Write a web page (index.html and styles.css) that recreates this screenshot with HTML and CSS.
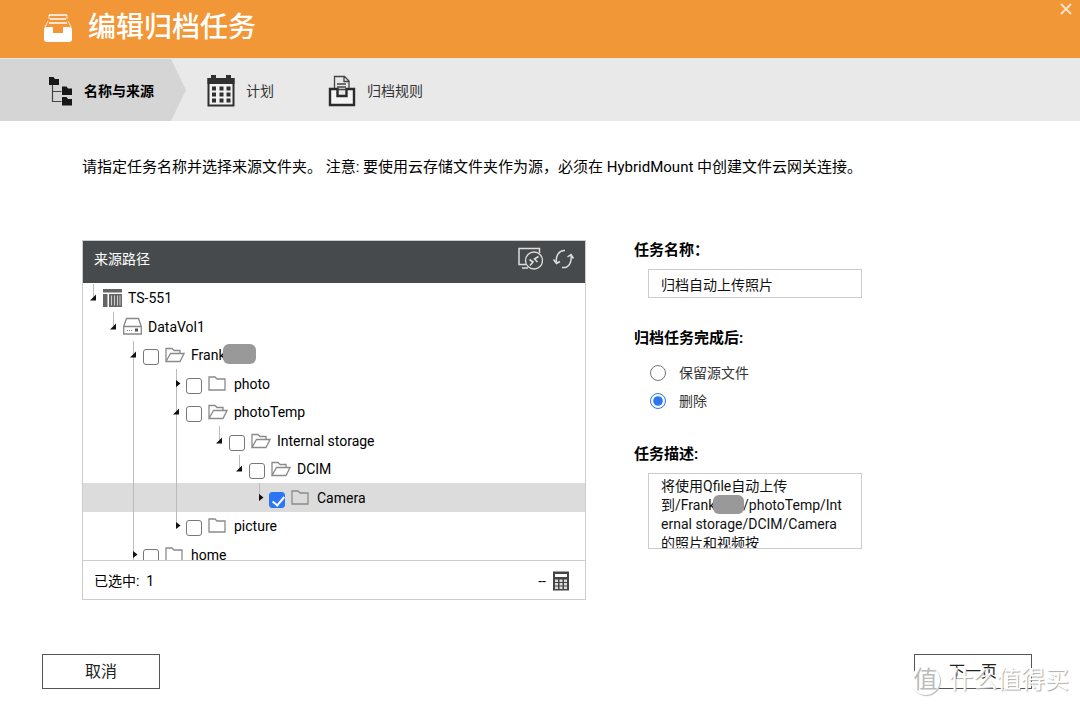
FILE: index.html
```html
<!DOCTYPE html>
<html lang="zh-CN">
<head>
<meta charset="utf-8">
<title>编辑归档任务</title>
<link rel="stylesheet" href="styles.css">
</head>
<body>
<svg class="defs" aria-hidden="true">
  <symbol id="open" viewBox="0 0 9 28"><path d="M6 10.5V16.5H0Z" fill="#111"/></symbol>
  <symbol id="closed" viewBox="0 0 9 28"><path d="M3 10L7.5 13.5L3 17Z" fill="#111"/></symbol>
  <symbol id="folder" viewBox="0 0 20 16"><path d="M1 14V1H7L9 3H17V14Z" fill="none" stroke="#8a8a8a" stroke-width="1.3"/></symbol>
  <symbol id="folder-open" viewBox="0 0 20 16"><path d="M1 14.500V1.500H7L9 3.500H15V6.500M1 14.500L5.500 6.500H19L15 14.500Z" fill="none" stroke="#8a8a8a" stroke-width="1.3"/></symbol>
</svg>

<header class="titlebar">
  <svg class="title-icon" viewBox="0 0 30 30" aria-hidden="true">
    <path d="M6 2H24M7 6H23M6 10H24" stroke="#fff" stroke-width="1.4"/>
    <path d="M6 2V6M24 2V6M5 8L2 14M25 8L28 14" stroke="#fff" stroke-width="1" opacity=".8"/>
    <path d="M3 14H10V20H20V14H27Q29 14 29 16V26Q29 29 26 29H4Q1 29 1 26V16Q1 14 3 14Z" fill="#fff"/>
  </svg>
  <h1>编辑归档任务</h1>
  <button class="close" aria-label="关闭"><svg viewBox="0 0 12 12"><path d="M1 1L11 11M11 1L1 11" stroke="#fbe3ca" stroke-width="1.8"/></svg></button>
</header>

<ol class="steps">
  <li class="step current" aria-current="step">
    <svg class="step-icon tree-icon" viewBox="0 0 24 30" aria-hidden="true">
      <path d="M4 9V25.500H13M4 15.500H13" fill="none" stroke="#444" stroke-width="1.2"/>
      <path d="M.5 1H5L6.500 3H10.500V9H.5ZM13.500 10.500H18L19.500 12.500H23.500V19H13.500ZM13.500 21H18L19.500 23H23.500V29.500H13.500Z" fill="#181818"/>
    </svg>
    <span>名称与来源</span>
  </li>
  <li class="step">
    <svg class="step-icon" viewBox="0 0 28 32" aria-hidden="true">
      <path d="M1.500 4H26.500V30.500H1.500Z" fill="#f1f1f1" stroke="#303030" stroke-width="2"/>
      <path d="M.5 3H27.500V9H.5ZM4 0H9V4H4ZM19 0H24V4H19Z" fill="#303030"/>
      <path d="M5 11.500h4v4H5zm7.500 0h4v4h-4zm7 0h4v4h-4zM5 17.500h4v4H5zm7.500 0h4v4h-4zm7 0h4v4h-4zM5 23.500h4v4H5zm7.500 0h4v4h-4zm7 0h4v4h-4z" fill="#303030"/>
    </svg>
    <span>计划</span>
  </li>
  <li class="step">
    <svg class="step-icon" viewBox="0 0 28 32" aria-hidden="true">
      <path d="M2 14H9.500V21H18.500V14H26V30H2Z" fill="#f4f4f4" stroke="#2b2b2b" stroke-width="2.400"/>
      <path d="M6.500 13V1.500H16.500L21 6V13M16 2V6.500H21M9 9H18M9 12H18M9.500 14.500H18.500" fill="none" stroke="#444" stroke-width="1.300"/>
    </svg>
    <span>归档规则</span>
  </li>
</ol>

<main>
  <p class="intro">请指定任务名称并选择来源文件夹。 注意: 要使用云存储文件夹作为源，必须在 HybridMount 中创建文件云网关连接。</p>
  <div class="columns">
    <section class="panel">
      <div class="panel-head">
        <h2>来源路径</h2>
        <button class="tool" aria-label="远程连接"><svg viewBox="0 0 26 24"><path d="M9 17.500H2V1.500H22.500V6M5 21H11" fill="none" stroke="#ddd" stroke-width="1.500"/><circle cx="17" cy="13.500" r="8.500" fill="#474a4c" stroke="#ddd" stroke-width="1.300"/><path d="M12.500 12.500L16 15L13 18.500M21.500 9.500L17.500 12L20.500 15" fill="none" stroke="#ddd" stroke-width="1.600"/></svg></button>
        <button class="tool" aria-label="刷新"><svg viewBox="0 0 26 24"><path d="M14 3.500C8 3 4.500 9 5.500 15M2.500 12.500L5.500 16.500L9 14.500M11 20.500C18 21.500 21 15 20 8.500M16.500 10L20 7.500L22.500 11.500" fill="none" stroke="#ddd" stroke-width="1.500"/></svg></button>
      </div>
      <div class="tree" role="tree">
        <div class="row" role="treeitem">
          <button class="toggle half" aria-label="折叠"><svg><use href="#open"/></svg></button>
          <svg class="node" viewBox="0 0 20 20"><path d="M0 1H19V4.500H0ZM0 6H4.500V19H0ZM6 6H19V19H6Z" fill="#666"/><path d="M8.500 7.500V17.500M11.500 7.500V17.500M14.500 7.500V17.500M17 7.500V17.500" stroke="#ccc"/></svg>
          <span>TS-551</span>
        </div>
        <div class="row" role="treeitem">
          <i class="indent"></i>
          <button class="toggle half" aria-label="折叠"><svg><use href="#open"/></svg></button>
          <svg class="node" viewBox="0 0 20 20"><path d="M.7 9.500L3.500 1.500H15.500L18.300 9.500V17H.7ZM.7 9.500H18.300" fill="none" stroke="#888" stroke-width="1.300"/><path d="M4 13.500H10" stroke="#888" stroke-dasharray="1 1"/><path d="M12 11.500H15V14.500H12Z" fill="#555"/></svg>
          <span>DataVol1</span>
        </div>
        <div class="row" role="treeitem">
          <i class="indent"></i><i class="indent"></i>
          <button class="toggle" aria-label="折叠"><svg><use href="#open"/></svg></button>
          <input type="checkbox" id="n1"><label for="n1"><svg class="folder"><use href="#folder-open"/></svg><span class="masked">Frank</span></label>
        </div>
        <div class="row" role="treeitem">
          <i class="indent"></i><i class="indent"></i><i class="indent wide line"></i>
          <button class="toggle" aria-label="展开"><svg><use href="#closed"/></svg></button>
          <input type="checkbox" id="n2"><label for="n2"><svg class="folder"><use href="#folder"/></svg><span>photo</span></label>
        </div>
        <div class="row" role="treeitem">
          <i class="indent"></i><i class="indent"></i><i class="indent wide line"></i>
          <button class="toggle" aria-label="折叠"><svg><use href="#open"/></svg></button>
          <input type="checkbox" id="n3"><label for="n3"><svg class="folder"><use href="#folder-open"/></svg><span>photoTemp</span></label>
        </div>
        <div class="row" role="treeitem">
          <i class="indent"></i><i class="indent"></i><i class="indent wide line"></i><i class="indent wide line"></i>
          <button class="toggle half" aria-label="折叠"><svg><use href="#open"/></svg></button>
          <input type="checkbox" id="n4"><label for="n4"><svg class="folder"><use href="#folder-open"/></svg><span>Internal storage</span></label>
        </div>
        <div class="row" role="treeitem">
          <i class="indent"></i><i class="indent"></i><i class="indent wide line"></i><i class="indent wide line"></i><i class="indent"></i>
          <button class="toggle half" aria-label="折叠"><svg><use href="#open"/></svg></button>
          <input type="checkbox" id="n5"><label for="n5"><svg class="folder"><use href="#folder-open"/></svg><span>DCIM</span></label>
        </div>
        <div class="row selected" role="treeitem" aria-selected="true">
          <i class="indent"></i><i class="indent"></i><i class="indent wide line"></i><i class="indent wide line"></i><i class="indent"></i><i class="indent"></i>
          <button class="toggle half" aria-label="展开"><svg><use href="#closed"/></svg></button>
          <input type="checkbox" id="n6" checked><label for="n6"><svg class="folder"><use href="#folder"/></svg><span>Camera</span></label>
        </div>
        <div class="row" role="treeitem">
          <i class="indent"></i><i class="indent"></i><i class="indent wide line"></i>
          <button class="toggle half" aria-label="展开"><svg><use href="#closed"/></svg></button>
          <input type="checkbox" id="n7"><label for="n7"><svg class="folder"><use href="#folder"/></svg><span>picture</span></label>
        </div>
        <div class="row" role="treeitem">
          <i class="indent"></i><i class="indent"></i>
          <button class="toggle" aria-label="展开"><svg><use href="#closed"/></svg></button>
          <input type="checkbox" id="n8"><label for="n8"><svg class="folder"><use href="#folder"/></svg><span>home</span></label>
        </div>
      </div>
      <div class="panel-foot">
        <span class="count">已选中:&nbsp; 1</span>
        <span>--</span>
        <button class="calc" aria-label="计算大小"><svg viewBox="0 0 18 20"><path d="M1 .5H17V19.500H1Z" fill="#444"/><path d="M3 3H15V6H3Z" fill="#fff"/><path d="M3 8.500h3v2.500H3zm4.500 0h3v2.500h-3zm4.500 0h3v2.500h-3zM3 12h3v2.500H3zm4.500 0h3v2.500h-3zm4.500 0h3v2.500h-3zM3 15.500h3v2.500H3zm4.500 0h3v2.500h-3zm4.500 0h3v2.500h-3z" fill="#ddd"/></svg></button>
      </div>
    </section>

    <form class="form">
      <label class="heading" for="name">任务名称：</label>
      <input class="field" id="name" type="text" value="归档自动上传照片">
      <fieldset>
        <legend class="heading">归档任务完成后:</legend>
        <label class="option"><input type="radio" name="after">保留源文件</label>
        <label class="option"><input type="radio" name="after" checked>删除</label>
      </fieldset>
      <label class="heading" for="desc">任务描述:</label>
      <div class="desc-wrap">
        <textarea class="field" id="desc">将使用Qfile自动上传
到/Frank&nbsp;&nbsp;&nbsp;&nbsp;&nbsp;&nbsp;&nbsp;&nbsp;/photoTemp/Int
ernal storage/DCIM/Camera
的照片和视频按</textarea>
        <i class="mask"></i>
      </div>
    </form>
  </div>
</main>

<footer class="actions">
  <button class="action">取消</button>
  <button class="action">下一页</button>
</footer>
<div class="watermark"><span class="badge">值</span><span>什么值得买</span></div>
</body>
</html>
```
FILE: styles.css
```css
* { box-sizing: border-box; }

body {
  position: relative;
  display: flex;
  flex-direction: column;
  min-height: 100vh;
  margin: 0;
  background: #fff;
  color: #000;
  font: 14px/20px Roboto, "Noto Sans CJK SC", sans-serif;
}

button, input, textarea { font: inherit; color: inherit; }
button { padding: 0; border: 0; background: none; cursor: pointer; }
h1, h2, p, ol, fieldset { margin: 0; padding: 0; border: 0; }
svg { display: block; flex: none; }
.defs { position: absolute; width: 0; height: 0; }

.titlebar {
  position: relative;
  display: flex;
  align-items: center;
  gap: 15px;
  height: 58px;
  padding: 0 43px 2px;
  background: #f19738;
}
.titlebar h1 { color: #fff; font-size: 28px; font-weight: 500; line-height: 40px; }
.title-icon { width: 30px; height: 30px; }
.close { position: absolute; top: 3px; right: 8px; }
.close svg { width: 12px; height: 12px; }

.steps {
  display: flex;
  height: 63px;
  border-top: 1px solid #ece5dc;
  background: #e9e9e9;
  list-style: none;
}
.step {
  display: flex;
  align-items: center;
  gap: 11px;
  margin-right: 54px;
  padding-top: 1px;
  color: #333;
}
.step.current {
  width: 186px;
  margin-right: 21px;
  padding-left: 48px;
  background: #d5d5d5;
  clip-path: polygon(0 0, 171px 0, 100% 50%, 171px 100%, 0 100%);
  color: #000;
  font-weight: 700;
}
.step-icon { width: 28px; height: 32px; }
.tree-icon { width: 25px; height: 30px; }

main { padding: 35px 82px 0; }
.intro { font-size: 15px; line-height: 22px; }
.columns {
  display: grid;
  grid-template-columns: 18fr 13fr;
  align-items: start;
  gap: 48px;
  margin-top: 62px;
}

.panel { border: 1px solid #ccc; }
.panel-head {
  display: flex;
  align-items: center;
  gap: 8px;
  height: 42px;
  padding: 0 8px 6px 11px;
  background: #474a4c;
}
.panel-head h2 { flex: 1; color: #fff; font-size: 14px; font-weight: 400; }
.tool svg { width: 26px; height: 24px; }

.tree { height: 277px; padding-top: 1px; overflow: hidden; }
.row { display: flex; align-items: center; height: 28px; padding-left: 7px; }
.row:nth-child(even) { height: 29px; }
.row.selected { background: #dcdcdc; }
.indent { flex: none; align-self: stretch; width: 20px; }
.indent.wide { width: 43px; }
.line, .toggle { background: linear-gradient(#bbb, #bbb) 3px 0 / 1px 100% no-repeat; }
.toggle { flex: none; align-self: stretch; width: 13px; }
.toggle.half { background-size: 1px 50%; }
.toggle svg { width: 9px; height: 28px; }
.node { width: 20px; height: 20px; margin-right: 5px; }
.row input {
  position: relative;
  flex: none;
  appearance: none;
  width: 16px;
  height: 16px;
  margin: 4px 6px 0 0;
  border: 1px solid #777;
  border-radius: 3px;
  background: #fff;
}
.row input:checked { border-color: #2b76f5; background: #2b76f5; }
.row input:checked::after {
  content: "";
  position: absolute;
  left: 5px;
  top: 1px;
  width: 5px;
  height: 10px;
  border: solid #fff;
  border-width: 0 2px 2px 0;
  transform: rotate(40deg);
}
.row label { display: flex; align-items: center; gap: 6px; }
.folder { width: 20px; height: 16px; }
.masked { position: relative; }
.masked::after, .mask {
  content: "";
  position: absolute;
  left: 32px;
  top: -1px;
  width: 33px;
  height: 20px;
  border-radius: 6px;
  background: #999;
}

.panel-foot {
  display: flex;
  align-items: center;
  gap: 6px;
  height: 39px;
  padding: 1px 15px 0 11px;
  border-top: 1px solid #ccc;
}
.count { flex: 1; }
.calc svg { width: 18px; height: 20px; }

.form { display: flex; flex-direction: column; color: #333; }
.heading { padding: 0; color: #000; font-size: 15px; font-weight: 700; line-height: 20px; }
.field {
  width: 214px;
  margin: 9px 0 0 14px;
  padding: 0 12px;
  border: 1px solid #ccc;
  border-radius: 0;
  background: #fff;
  color: #111;
}
input.field { height: 29px; }
fieldset { min-width: 0; margin: 30px 0 29px; }
legend { margin-bottom: 11px; }
.option { display: flex; align-items: center; gap: 13px; height: 28px; margin-left: 16px; }
.option input { width: 16px; height: 16px; margin: 0; accent-color: #2b76f5; }
.desc-wrap { position: relative; }
textarea.field {
  display: block;
  height: 76px;
  padding-top: 3px;
  line-height: 19px;
  resize: none;
  overflow: hidden;
  word-break: break-all;
}
.mask { left: 79px; top: 31px; width: 31px; height: 19px; }

.actions {
  display: flex;
  justify-content: space-between;
  margin-top: auto;
  padding: 20px 48px 17px 42px;
}
.action {
  width: 118px;
  height: 35px;
  border: 1px solid #555;
  background: #fff;
  color: #222;
  font-size: 16px;
}

.watermark {
  position: absolute;
  right: 11px;
  bottom: 10px;
  display: flex;
  align-items: center;
  gap: 9px;
  color: #fff;
  font-size: 24px;
  line-height: 32px;
  text-shadow: 1px 1px 1px #aaa;
  pointer-events: none;
}
.badge {
  width: 29px;
  height: 29px;
  border-radius: 50%;
  background: #fff;
  box-shadow: 1px 1px 1px #bbb;
  color: #bbb;
  text-shadow: none;
  line-height: 29px;
  text-align: center;
}
```
